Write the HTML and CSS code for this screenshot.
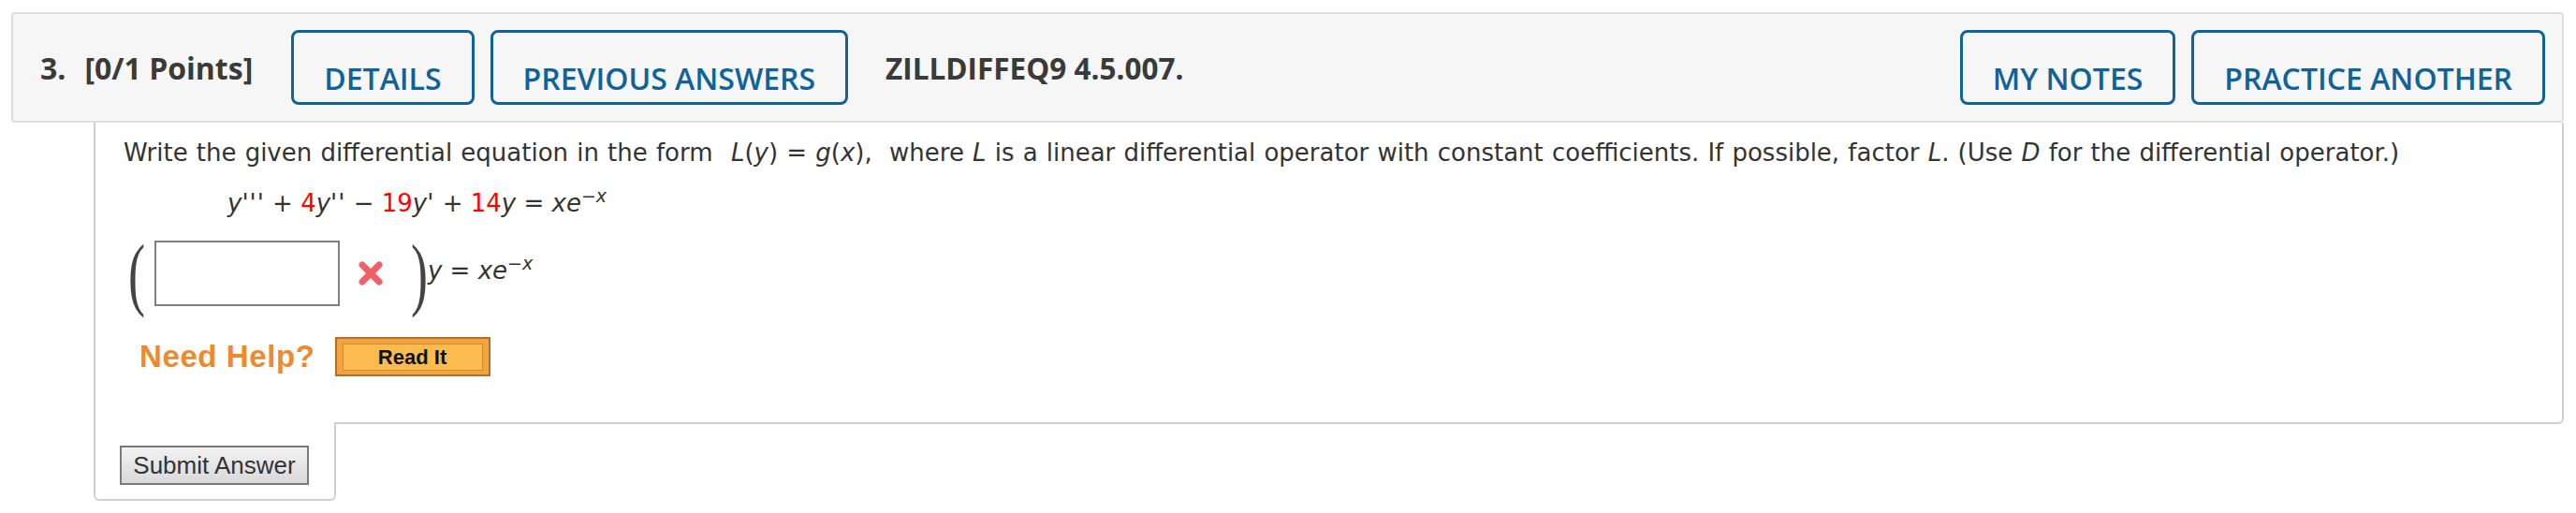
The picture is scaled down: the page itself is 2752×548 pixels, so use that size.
FILE: index.html
```
<!DOCTYPE html>
<html lang="en">
<head>
    <meta charset="UTF-8">
    <title>WebAssign - Question 3</title>
    <link rel="stylesheet" href="styles.css">
</head>
<body>
    <div class="question">
        <div class="q-head">
            <h3 class="q-title"><span>3.</span><span class="q-points">[0/1 Points]</span></h3>
            <button class="q-btn first">DETAILS</button>
            <button class="q-btn">PREVIOUS ANSWERS</button>
            <span class="q-code">ZILLDIFFEQ9 4.5.007.</span>
            <button class="q-btn push">MY NOTES</button>
            <button class="q-btn">PRACTICE ANOTHER</button>
        </div>

        <div class="q-body">
            <p class="prompt">Write the given differential equation in the form&nbsp; <span class="math"><i>L</i>(<i>y</i>) = <i>g</i>(<i>x</i>),</span>&nbsp; where <i>L</i> is a linear differential operator with constant coefficients. If possible, factor <i>L</i>. (Use <i>D</i> for the differential operator.)</p>

            <p class="eq"><i>y<span class="pr">'''</span></i> + <span class="num">4</span><i>y<span class="pr">''</span></i> &minus; <span class="num">19</span><i>y<span class="pr">'</span></i> + <span class="num">14</span><i>y</i> = <i>xe</i><sup>&minus;<i>x</i></sup></p>

            <div class="answer-row">
                <span class="paren">(</span>
                <input class="ans" type="text">
                <svg class="wrong" width="28" height="26" viewBox="0 0 28 26">
                    <path d="M5 4 L23 22 M23 4 L5 22" stroke="#ef6068" stroke-width="7" stroke-linecap="round" fill="none"/>
                </svg>
                <span class="paren close">)</span>
                <span class="rhs"><i>y</i> = <i>xe</i><sup>&minus;<i>x</i></sup></span>
            </div>

            <div class="help-row">
                <span class="need-help">Need Help?</span>
                <button class="read-it"><span>Read It</span></button>
            </div>
        </div>

        <div class="q-submit">
            <button class="submit">Submit Answer</button>
        </div>
    </div>
</body>
</html>
```

FILE: styles.css
```
body {
    margin: 0;
    background: #fff;
    font-family: 'DejaVu Sans', Verdana, sans-serif;
    color: #333;
}

/* question header bar */
.q-head {
    display: flex;
    align-items: center;
    gap: 17px;
    margin: 13px 13px 0 12px;
    padding: 17px 18px 17px 29px;
    background: #f6f6f6;
    border: 2px solid #dedede;
    border-radius: 4px;
    font-family: 'Open Sans', sans-serif;
}

.q-title {
    display: flex;
    gap: 20px;
    margin: 0;
    font-size: 32px;
    font-weight: 700;
    color: #3a3a3a;
}

.q-code {
    margin-left: 23px;
    font-size: 31.5px;
    font-weight: 700;
    color: #3a3a3a;
}

.q-btn {
    font-family: 'Open Sans', sans-serif;
    font-size: 32px;
    font-weight: 600;
    line-height: 44px;
    color: #0f6399;
    background: transparent;
    border: 3px solid #0f6399;
    border-radius: 8px;
    padding: 27px 32px 3px;
}

.q-btn.first {
    margin-left: 24px;
}

.q-btn.push {
    margin-left: auto;
}

/* question body */
.q-body {
    margin: 0 13px 0 100px;
    padding: 17px 30px 49px;
    border: 2px solid #cfcfcf;
    border-top: none;
    border-radius: 0 0 6px 0;
    font-size: 26px;
    line-height: 30px;
}

.prompt {
    margin: 0;
    word-spacing: 0.9px;
}

.math {
    margin-left: 1px;
}

.eq {
    margin: 24px 0 0 111px;
}

.pr {
    letter-spacing: 1px;
}

.num {
    color: #f00;
}

sup {
    font-size: 19px;
    line-height: 0;
    vertical-align: 10px;
}

.answer-row {
    display: flex;
    align-items: center;
    height: 76px;
    margin-top: 22px;
}

.paren {
    font-family: 'Liberation Serif', serif;
    font-size: 54px;
    line-height: 54px;
    color: #444;
    transform: scaleY(1.6);
    margin-left: 5px;
}

.paren.close {
    margin-left: 29px;
}

.ans {
    box-sizing: border-box;
    width: 198px;
    height: 70px;
    margin: 0 0 0 10px;
    border: 2px solid #808080;
    background: #fff;
}

.wrong {
    margin-left: 19px;
}

.rhs {
    margin-bottom: 6px;
}

.help-row {
    display: flex;
    align-items: center;
    height: 42px;
    margin-top: 30px;
    padding-left: 17px;
}

.need-help {
    font-family: 'Liberation Sans', Arial, sans-serif;
    font-size: 33px;
    font-weight: 700;
    letter-spacing: 0.6px;
    color: #ee8a2d;
}

.read-it {
    box-sizing: border-box;
    width: 166px;
    height: 42px;
    margin-left: 21px;
    padding: 5px 6px 4px;
    background: #f2a440;
    border: 2px solid #b36f2c;
}

.read-it span {
    display: block;
    height: 100%;
    box-sizing: border-box;
    background: #fcbb4f;
    border: 1px solid #cf8a36;
    font-family: 'Liberation Sans', Arial, sans-serif;
    font-size: 22px;
    font-weight: 700;
    line-height: 27px;
    color: #111;
}

/* submit tab under the body */
.q-submit {
    box-sizing: border-box;
    width: 259px;
    margin: -2px 0 0 100px;
    padding: 25px 0 15px 26px;
    background: #fff;
    border: 2px solid #cfcfcf;
    border-top: none;
    border-radius: 0 0 6px 6px;
}

.submit {
    box-sizing: border-box;
    display: block;
    width: 202px;
    height: 42px;
    padding: 0;
    font-family: 'Liberation Sans', Arial, sans-serif;
    font-size: 26px;
    color: #333;
    background: linear-gradient(#f2f2f2, #d9d9d9);
    border: 2px solid #7a7a7a;
}
```
